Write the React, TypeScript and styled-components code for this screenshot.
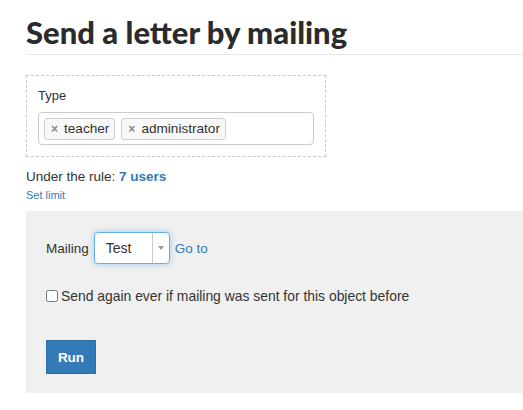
import React from "react";
import styled, { createGlobalStyle } from "styled-components";

const Global = createGlobalStyle`
  html, body { margin: 0; padding: 0; background: #fff; }
  body { font-family: "Liberation Sans", Arial, sans-serif; color: #333; }
  * { box-sizing: border-box; }
`;

const Page = styled.div`
  padding: 14px 0 0 26px;
  width: 523px;
`;

const Title = styled.h1`
  margin: 0;
  font-family: "Lato", "Liberation Sans", sans-serif;
  font-size: 31px;
  font-weight: 900;
  line-height: 36px;
  color: #2b2b2b;
  padding-bottom: 4px;
  border-bottom: 1px solid #e8e8e8;
`;

const FilterBox = styled.div`
  margin-top: 20px;
  width: 300px;
  border: 1px dashed #c8c8c8;
  padding: 12px 11px 11px 11px;
`;

const Label = styled.div`
  font-size: 13px;
  line-height: 16px;
  color: #333;
  margin-bottom: 8px;
`;

const TagInput = styled.div`
  height: 33px;
  border: 1px solid #ccc;
  border-radius: 4px;
  display: flex;
  align-items: center;
  gap: 6px;
  padding: 0 5px;
  background: #fff;
`;

const Tag = styled.span`
  display: inline-flex;
  align-items: center;
  height: 22px;
  padding: 0 5px 0 6px;
  border: 1px solid #cfcfcf;
  border-radius: 3px;
  background: #f8f8f8;
  font-size: 13.6px;
  color: #333;
  gap: 6px;
`;

const TagX = styled.span`
  color: #888;
  font-size: 12px;
  font-weight: bold;
`;

const Rule = styled.div`
  margin-top: 12px;
  font-size: 13.5px;
  line-height: 16px;
`;

const Strong = styled.a`
  color: #337ab7;
  font-weight: 700;
  text-decoration: none;
`;

const SmallLink = styled.a`
  display: block;
  margin-top: 3px;
  font-size: 11px;
  line-height: 14px;
  color: #337ab7;
  text-decoration: none;
`;

const Panel = styled.div`
  margin-top: 9px;
  background: #f0f0f0;
  padding: 21px 20px 19px 20px;
  height: 182px;
`;

const Row = styled.div`
  display: flex;
  align-items: center;
  gap: 5px;
  font-size: 13.5px;
`;

const Select = styled.div`
  width: 76px;
  height: 32px;
  border: 1px solid #66afe9;
  border-radius: 4px;
  background: #fff;
  box-shadow: 0 0 6px rgba(102, 175, 233, 0.6);
  display: flex;
  align-items: stretch;
`;

const SelectValue = styled.div`
  flex: 1;
  display: flex;
  align-items: center;
  padding-left: 11px;
  font-size: 14px;
  color: #333;
`;

const SelectArrow = styled.div`
  width: 17px;
  border-left: 1px solid #ccc;
  display: flex;
  align-items: center;
  justify-content: center;
  &::after {
    content: "";
    border-left: 3px solid transparent;
    border-right: 3px solid transparent;
    border-top: 4px solid #999;
  }
`;

const Link = styled.a`
  color: #337ab7;
  font-size: 13.5px;
  text-decoration: none;
`;

const CheckRow = styled.label`
  display: flex;
  align-items: center;
  gap: 3px;
  margin-top: 24px;
  font-size: 13.9px;
  color: #333;
`;

const Check = styled.input`
  margin: 0;
  width: 12px;
  height: 12px;
`;

const RunButton = styled.button`
  margin-top: 36px;
  width: 50px;
  height: 34px;
  background: #337ab7;
  border: 1px solid #2e6da4;
  color: #fff;
  font-family: inherit;
  font-size: 13.5px;
  font-weight: 700;
  border-radius: 0;
  padding: 0;
`;

export default function App() {
  return (
    <>
      <Global />
      <Page>
        <Title>Send a letter by mailing</Title>
        <FilterBox>
          <Label>Type</Label>
          <TagInput>
            <Tag><TagX>×</TagX>teacher</Tag>
            <Tag><TagX>×</TagX>administrator</Tag>
          </TagInput>
        </FilterBox>
        <Rule>
          Under the rule: <Strong href="#">7 users</Strong>
        </Rule>
        <SmallLink href="#">Set limit</SmallLink>
        <Panel>
          <Row>
            Mailing
            <Select>
              <SelectValue>Test</SelectValue>
              <SelectArrow />
            </Select>
            <Link href="#">Go to</Link>
          </Row>
          <CheckRow>
            <Check type="checkbox" />
            Send again ever if mailing was sent for this object before
          </CheckRow>
          <RunButton>Run</RunButton>
        </Panel>
      </Page>
    </>
  );
}
